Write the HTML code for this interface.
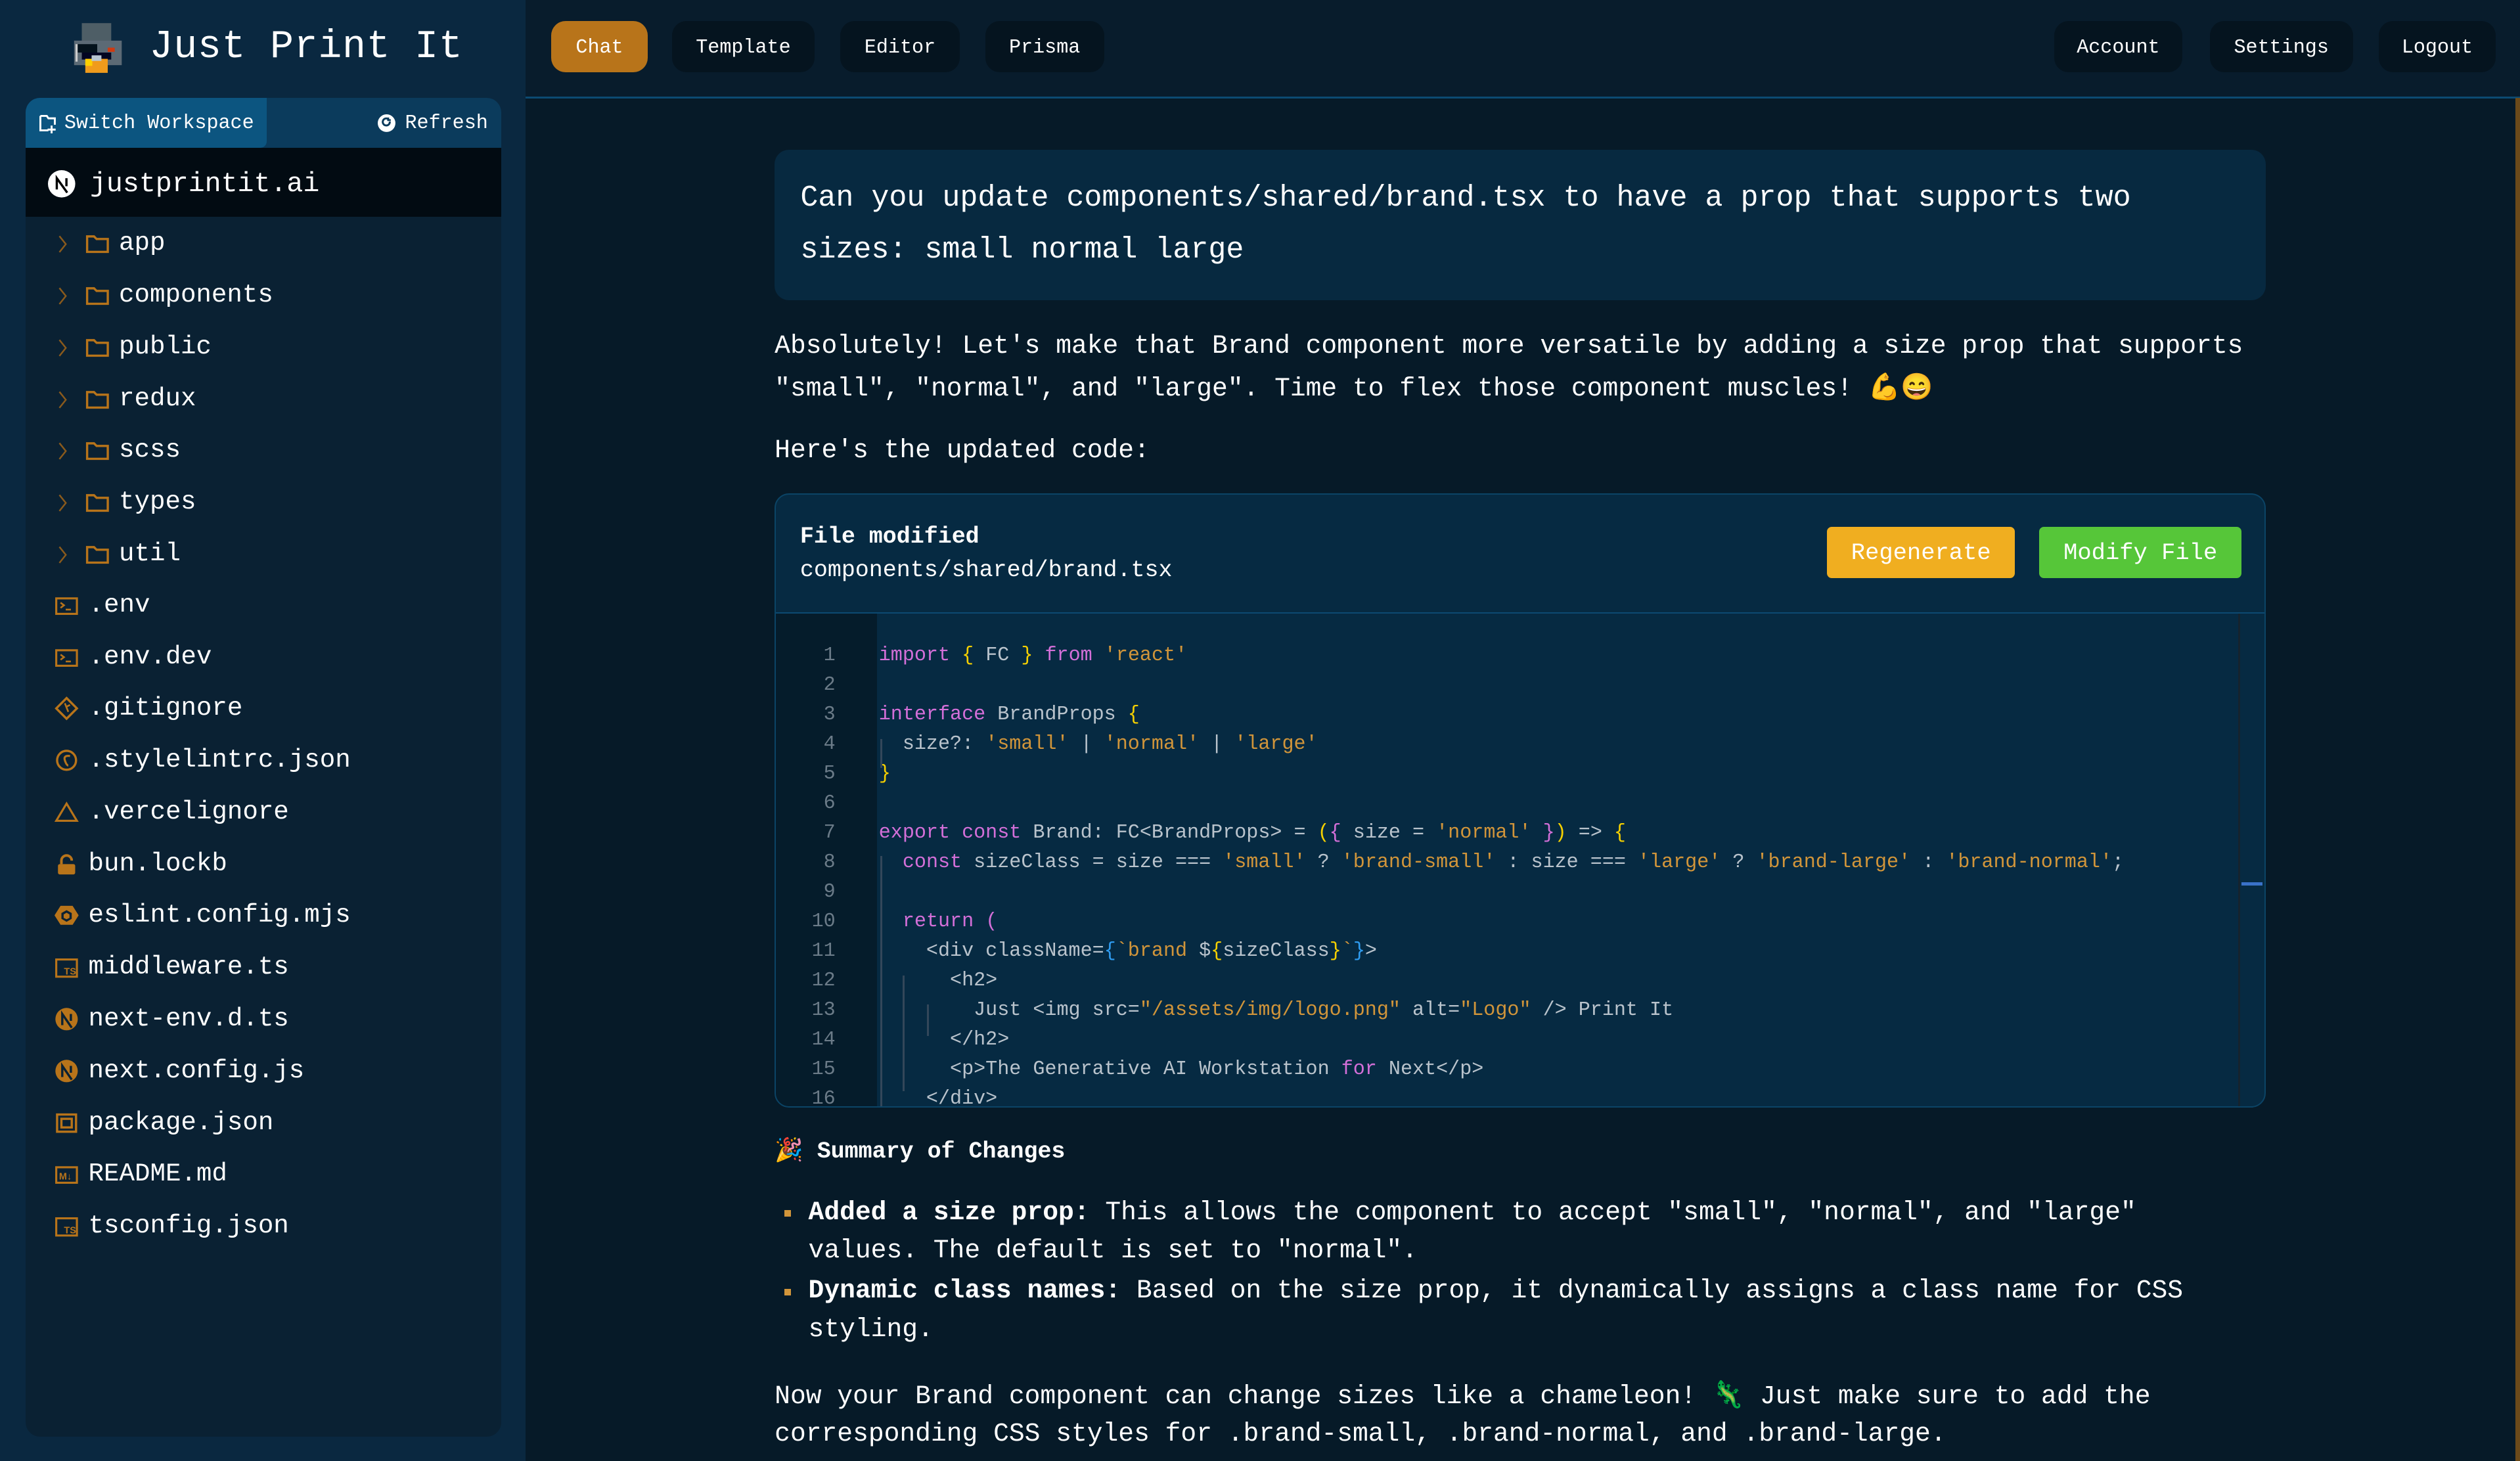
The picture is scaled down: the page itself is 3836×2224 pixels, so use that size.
<!DOCTYPE html>
<html><head><meta charset="utf-8">
<style>
*{box-sizing:border-box;margin:0;padding:0}
html,body{width:3836px;height:2224px;overflow:hidden;background:#061a28}
#root{zoom:2.44643;width:1568px;height:909px;position:relative;font-family:"Liberation Mono","DejaVu Sans Mono",monospace;color:#fff;background:#061a28}
.abs{position:absolute}
#side{left:0;top:0;width:327px;height:909px;background:#0a2840}
#title{left:93px;top:15px;font-size:24.5px;letter-spacing:0.3px;white-space:nowrap}
#panel{left:16px;top:61px;width:296px;height:833px;background:#0a2133;border-radius:9px;overflow:hidden}
#tabs{left:0;top:0;width:296px;height:31px;background:#0b3b5c}
#sw{left:0;top:0;width:150px;height:31px;background:#0c5580;border-radius:0 0 4px 0}
.t12{font-size:12.3px;white-space:nowrap}
#selrow{left:0;top:31px;width:296px;height:43px;background:#020b12}
.row{position:absolute;font-size:16px;white-space:nowrap;color:#fff;margin-top:2px}
.nav{position:absolute;top:13px;height:32px;border-radius:9px;background:#05141f;font-size:12.3px;line-height:34px;text-align:center;color:#fff}
#topline{left:327px;top:60px;width:1241px;height:1.5px;background:#0c4a72}
#topbar{left:327px;top:0;width:1241px;height:60px;background:#081c2c}
.p{position:absolute;font-size:16.2px;white-space:nowrap;color:#fff;margin-top:2px}
#bubble{left:482px;top:93px;width:928px;height:94px;background:#072940;border-radius:9px}
#card{left:482px;top:307px;width:928px;height:382px;background:#062a42;border:1px solid #0b4466;border-radius:9px;overflow:hidden}
#gut{left:0;top:74px;width:63px;height:308px;background:#051c2b}
.ln{position:absolute;width:37px;text-align:right;font-size:12.3px;color:#6b7b88;margin-top:2px}
.cl{position:absolute;left:64px;font-size:12.3px;white-space:pre;color:#b9c3cc;margin-top:2px}
.k{color:#d36fd8}.s{color:#d1953a}.y{color:#f5d000}.b{color:#2f9cf0}
.btn{position:absolute;top:20px;height:32px;line-height:33px;text-align:center;font-size:14.5px;color:#fff;border-radius:3px}
.guide{position:absolute;width:1px;background:#33475a}
</style></head><body><div id="root">
<div id="side" class="abs">
  <svg class="abs" style="left:44px;top:13px" width="34" height="34" viewBox="52 15 75 78">
    <rect x="66" y="18" width="42" height="26" fill="#4e5e66"/>
    <rect x="55" y="43" width="68" height="35" fill="#5c6a75"/>
    <rect x="60" y="48" width="28" height="12" fill="#04121c"/>
    <rect x="57" y="48" width="3" height="25" fill="#ccc"/>
    <rect x="103" y="53" width="10" height="6" fill="#d03a10"/>
    <rect x="66" y="60" width="42" height="10" fill="#020622"/>
    <rect x="71" y="69" width="32" height="20" fill="#f09b1c"/>
    <rect x="71" y="69" width="10" height="10" fill="#ffd000"/>
    <rect x="80" y="64" width="14" height="8" fill="#b8c6d2"/>
  </svg>
  <div id="title" class="abs">Just Print It</div>
  <div id="panel" class="abs">
    <div id="tabs" class="abs"></div>
    <div id="sw" class="abs"></div>
    <svg class="abs" style="left:8px;top:10px" width="11" height="12" viewBox="0 0 11 12"><path d="M1 1h4l1 1.5h4v4M1 1v9h5M8 7v5M5.5 9.5h5" stroke="#fff" stroke-width="1.2" fill="none"/></svg>
    <div class="abs t12" style="left:24px;top:9px">Switch Workspace</div>
    <svg class="abs" style="left:219px;top:10px" width="11" height="11" viewBox="0 0 11 11"><circle cx="5.5" cy="5.5" r="5.5" fill="#fff"/><path d="M7.5 4.5a2.2 2.2 0 1 1-1-1.6M6.5 2v1.6h1.6" stroke="#0b3b5c" stroke-width="1.2" fill="none"/></svg>
    <div class="abs t12" style="left:236px;top:9px">Refresh</div>
    <div id="selrow" class="abs"></div>
    <svg class="abs" style="left:14px;top:45px" width="17" height="17" viewBox="0 0 17 17"><circle cx="8.5" cy="8.5" r="8.5" fill="#fff"/><path d="M5.5 12V5l6.5 9M11.5 5v5" stroke="#000" stroke-width="1.4" fill="none"/></svg>
    <div class="row" style="left:40px;top:42px;font-size:17px">justprintit.ai</div>
  </div>
  <div id="tree"></div>
</div>
<div id="topbar" class="abs"></div>
<div id="topline" class="abs"></div>
<div class="nav" style="left:343px;width:60px;background:#b8741a">Chat</div>
<div class="nav" style="left:418px;width:89px">Template</div>
<div class="nav" style="left:523px;width:74px">Editor</div>
<div class="nav" style="left:613px;width:74px">Prisma</div>
<div class="nav" style="left:1278px;width:80px">Account</div>
<div class="nav" style="left:1375px;width:89px">Settings</div>
<div class="nav" style="left:1480px;width:73px">Logout</div>
<div class="abs" style="left:1565px;top:61px;width:3px;height:848px;background:#6b4a1a"></div>

<div id="bubble" class="abs"></div>
<div class="p" style="left:498px;top:111px;font-size:18.4px">Can you update components/shared/brand.tsx to have a prop that supports two</div>
<div class="p" style="left:498px;top:143px;font-size:18.4px">sizes: small normal large</div>
<div class="p" style="left:482px;top:204px">Absolutely! Let's make that Brand component more versatile by adding a size prop that supports</div>
<div class="p" style="left:482px;top:229px">"small", "normal", and "large". Time to flex those component muscles! 💪😄</div>
<div class="p" style="left:482px;top:269px">Here's the updated code:</div>

<div id="card" class="abs">
  <div class="abs" style="left:15px;top:18px;font-size:14.3px;font-weight:bold">File modified</div>
  <div class="abs" style="left:15px;top:39px;font-size:14.3px;white-space:nowrap">components/shared/brand.tsx</div>
  <div class="btn" style="left:654px;width:117px;background:#f0ae20">Regenerate</div>
  <div class="btn" style="left:786px;width:126px;background:#56c639">Modify File</div>
  <div class="abs" style="left:0;top:73px;width:928px;height:1px;background:#0c4a72"></div>
  <div id="gut" class="abs"></div>
  <div class="abs" style="left:912px;top:241px;width:13px;height:2px;background:#3a72c8"></div>
  <div class="abs" style="left:910px;top:74px;width:1px;height:308px;background:#15232e"></div>
  <div id="code"></div>
</div>

<div class="p" style="left:482px;top:705px;font-size:14.3px;font-weight:bold">🎉 Summary of Changes</div>
<div class="abs" style="left:488px;top:753px;width:4px;height:4px;background:#d1953a"></div>
<div class="p" style="left:503px;top:743px"><b>Added a size prop:</b> This allows the component to accept "small", "normal", and "large"</div>
<div class="p" style="left:503px;top:767px">values. The default is set to "normal".</div>
<div class="abs" style="left:488px;top:802px;width:4px;height:4px;background:#d1953a"></div>
<div class="p" style="left:503px;top:792px"><b>Dynamic class names:</b> Based on the size prop, it dynamically assigns a class name for CSS</div>
<div class="p" style="left:503px;top:816px">styling.</div>
<div class="p" style="left:482px;top:856px">Now your Brand component can change sizes like a chameleon! 🦎 Just make sure to add the</div>
<div class="p" style="left:482px;top:881px">corresponding CSS styles for .brand-small, .brand-normal, and .brand-large.</div>

<script>
var O='#b8741a';
var folder='<path d="M1 3h4l1.5 1.5H13V12H1z" stroke="'+O+'" stroke-width="1.3" fill="none"/>';
var dirs=['app','components','public','redux','scss','types','util'];
var h='';
dirs.forEach(function(d,i){var y=141+i*32.2;
h+='<svg class="abs" style="left:36px;top:'+(y+5)+'px" width="6" height="12" viewBox="0 0 6 12"><path d="M1 1l4 5-4 5" stroke="#8a5a1c" stroke-width="1" fill="none"/></svg>';
h+='<svg class="abs" style="left:53px;top:'+(y+3)+'px" width="15" height="15" viewBox="0 0 14 14">'+folder+'</svg>';
h+='<div class="row" style="left:74px;top:'+(y-1)+'px">'+d+'</div>';});
var ic={
term:'<rect x="1" y="3" width="12" height="9" stroke="'+O+'" stroke-width="1.2" fill="none"/><path d="M3.5 5.5l2 1.5-2 1.5M6.5 9.5h3" stroke="'+O+'" stroke-width="1" fill="none"/>',
git:'<path d="M7 1l6 6-6 6-6-6z" stroke="'+O+'" stroke-width="1.3" fill="none"/><path d="M6 4l2 5M7 6l2-1" stroke="'+O+'" stroke-width="1"/>',
sty:'<circle cx="7" cy="7" r="5.5" stroke="'+O+'" stroke-width="1.3" fill="none"/><path d="M9 4.5Q5 4 6 7t2 3" stroke="'+O+'" stroke-width="1.2" fill="none"/>',
tri:'<path d="M7 2l6 10H1z" stroke="'+O+'" stroke-width="1.2" fill="none"/>',
lock:'<rect x="2" y="7" width="10" height="6" rx="1" fill="'+O+'"/><path d="M4 7V5a3 3 0 0 1 6 0" stroke="'+O+'" stroke-width="1.5" fill="none"/>',
esl:'<path d="M3.5 1.5h7L14 7l-3.5 5.5h-7L0 7z" fill="'+O+'"/><path d="M7 4l3 1.7v3.3L7 10.8 4 9V5.7z" fill="#0a2133"/><path d="M7 5.5l1.7 1v2L7 9.3 5.3 8.5v-2z" fill="'+O+'"/>',
ts:'<rect x="1" y="2.5" width="12" height="10" stroke="'+O+'" stroke-width="1.2" fill="none"/><text x="5.5" y="11.2" font-size="5.5" font-family="Liberation Sans" font-weight="bold" fill="'+O+'">TS</text>',
nx:'<circle cx="7" cy="7" r="6.5" fill="'+O+'"/><path d="M4.5 10.5V4l5.5 8M9.5 4v4" stroke="#0a2133" stroke-width="1.3" fill="none"/>',
pkg:'<rect x="1.5" y="2.5" width="11" height="10" stroke="'+O+'" stroke-width="1.3" fill="none"/><rect x="4" y="5" width="6" height="5" stroke="'+O+'" stroke-width="1.3" fill="none"/>',
md:'<rect x="1" y="3" width="12" height="9" stroke="'+O+'" stroke-width="1.2" fill="none"/><text x="2.6" y="10.2" font-size="5.5" font-family="Liberation Sans" font-weight="bold" fill="'+O+'">M↓</text>'};
var files=[['term','.env'],['term','.env.dev'],['git','.gitignore'],['sty','.stylelintrc.json'],['tri','.vercelignore'],['lock','bun.lockb'],['esl','eslint.config.mjs'],['ts','middleware.ts'],['nx','next-env.d.ts'],['nx','next.config.js'],['pkg','package.json'],['md','README.md'],['ts','tsconfig.json']];
files.forEach(function(f,i){var y=366+i*32.2;
h+='<svg class="abs" style="left:34px;top:'+(y+3)+'px" width="15" height="15" viewBox="0 0 14 14">'+ic[f[0]]+'</svg>';
h+='<div class="row" style="left:55px;top:'+(y-1)+'px">'+f[1]+'</div>';});
document.getElementById('tree').innerHTML=h;

var L=[
'<span class="k">import</span> <span class="y">{</span> FC <span class="y">}</span> <span class="k">from</span> <span class="s">\'react\'</span>',
'',
'<span class="k">interface</span> BrandProps <span class="y">{</span>',
'  size?: <span class="s">\'small\'</span> | <span class="s">\'normal\'</span> | <span class="s">\'large\'</span>',
'<span class="y">}</span>',
'',
'<span class="k">export const</span> Brand: FC&lt;BrandProps&gt; = <span class="y">(</span><span class="k">{</span> size = <span class="s">\'normal\'</span> <span class="k">}</span><span class="y">)</span> =&gt; <span class="y">{</span>',
'  <span class="k">const</span> sizeClass = size === <span class="s">\'small\'</span> ? <span class="s">\'brand-small\'</span> : size === <span class="s">\'large\'</span> ? <span class="s">\'brand-large\'</span> : <span class="s">\'brand-normal\'</span>;',
'',
'  <span class="k">return</span> <span class="k">(</span>',
'    &lt;div className=<span class="b">{</span><span class="s">`brand </span>$<span class="y">{</span>sizeClass<span class="y">}</span><span class="s">`</span><span class="b">}</span>&gt;',
'      &lt;h2&gt;',
'        Just &lt;img src=<span class="s">"/assets/img/logo.png"</span> alt=<span class="s">"Logo"</span> /&gt; Print It',
'      &lt;/h2&gt;',
'      &lt;p&gt;The Generative AI Workstation <span class="k">for</span> Next&lt;/p&gt;',
'    &lt;/div&gt;'];
var c='';
L.forEach(function(l,i){var y=91+i*18.4;
c+='<div class="ln" style="left:0;top:'+y+'px">'+(i+1)+'</div><div class="cl" style="top:'+y+'px">'+l+'</div>';});
c+='<div class="guide" style="left:65px;top:152px;height:18px"></div>';
c+='<div class="guide" style="left:65px;top:225px;height:160px"></div>';
c+='<div class="guide" style="left:79px;top:299px;height:72px"></div>';
c+='<div class="guide" style="left:94px;top:317px;height:20px"></div>';
document.getElementById('code').innerHTML=c;
</script>
</div></body></html>
